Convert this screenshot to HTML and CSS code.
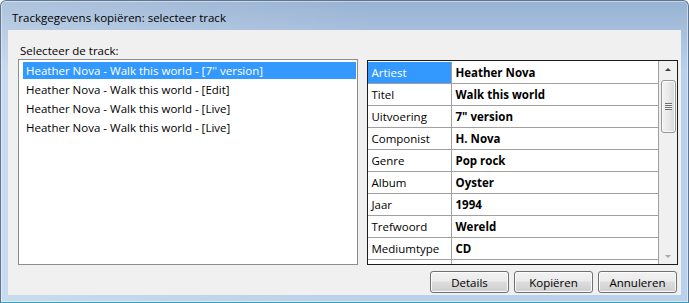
FILE: index.html
```html
<!DOCTYPE html>
<html lang="nl">
<head>
    <meta charset="UTF-8">
    <title>Trackgegevens kopiëren: selecteer track</title>
    <link rel="stylesheet" href="styles.css">
</head>
<body>
    <div class="window">
        <div class="titlebar">Trackgegevens kopiëren: selecteer track</div>
        <div class="client">
            <div class="prompt">Selecteer de track:</div>
            <div class="panes">
                <!-- tracklijst -->
                <ul class="track-list">
                    <li class="selected">Heather Nova - Walk this world - [7'' version]</li>
                    <li>Heather Nova - Walk this world - [Edit]</li>
                    <li>Heather Nova - Walk this world - [Live]</li>
                    <li>Heather Nova - Walk this world - [Live]</li>
                </ul>

                <!-- eigenschappen van de gekozen track -->
                <div class="props">
                    <div class="props-body">
                        <table class="props-table">
                            <tr class="selected"><td class="name">Artiest</td><td class="value">Heather Nova</td></tr>
                            <tr><td class="name">Titel</td><td class="value">Walk this world</td></tr>
                            <tr><td class="name">Uitvoering</td><td class="value">7" version</td></tr>
                            <tr><td class="name">Componist</td><td class="value">H. Nova</td></tr>
                            <tr><td class="name">Genre</td><td class="value">Pop rock</td></tr>
                            <tr><td class="name">Album</td><td class="value">Oyster</td></tr>
                            <tr><td class="name">Jaar</td><td class="value">1994</td></tr>
                            <tr><td class="name">Trefwoord</td><td class="value">Wereld</td></tr>
                            <tr><td class="name">Mediumtype</td><td class="value">CD</td></tr>
                            <tr><td class="name">&nbsp;</td><td class="value">&nbsp;</td></tr>
                        </table>
                    </div>
                    <div class="scrollbar">
                        <div class="sb-arrow up"></div>
                        <div class="sb-track">
                            <div class="sb-thumb"><span class="grip"></span></div>
                        </div>
                        <div class="sb-arrow down"></div>
                    </div>
                </div>
            </div>
            <div class="buttons">
                <button class="btn">Details</button>
                <button class="btn">Kopiëren</button>
                <button class="btn">Annuleren</button>
            </div>
        </div>
    </div>
</body>
</html>
```

FILE: styles.css
```css
html, body {
    margin: 0;
    padding: 0;
    background: #ffffff;
}

body {
    width: 689px;
    height: 303px;
    overflow: hidden;
    font-family: "Open Sans", "Noto Sans", sans-serif;
    font-size: 11.5px;
    color: #000;
}

/* venster */
.window {
    box-sizing: border-box;
    width: 689px;
    height: 303px;
    border: 1px solid #5f7690;
    border-bottom-color: #2fa3c4;
    border-radius: 6px 6px 0 0;
    padding: 0 7px 7px 7px;
    background:
        linear-gradient(to right, rgba(255, 255, 255, 0.22), rgba(255, 255, 255, 0) 55%),
        linear-gradient(#98b2d3, #b9d1ea 70px);
    box-shadow: inset 0 0 0 1px rgba(255, 255, 255, 0.45);
    display: flex;
    flex-direction: column;
}

.titlebar {
    height: 29px;
    box-sizing: border-box;
    padding: 7px 0 0 4px;
    line-height: 20px;
    color: #000;
    white-space: nowrap;
}

.client {
    height: 265px;
    box-sizing: border-box;
    background: #f0f0f0;
    padding: 12px 3px 0 10px;
}

.prompt {
    height: 17px;
    line-height: 17px;
    padding-left: 2px;
}

.panes {
    display: flex;
    gap: 9px;
}

/* lijst */
.track-list {
    list-style: none;
    margin: 0;
    box-sizing: border-box;
    width: 341px;
    height: 206px;
    padding: 2px 1px 0 4px;
    border: 1px solid #8d8d8d;
    background: #fff;
}

.track-list li {
    box-sizing: border-box;
    height: 17px;
    line-height: 16px;
    padding: 1px 0 0 3px;
    margin-bottom: 2px;
    white-space: nowrap;
}

.track-list li.selected {
    background: #3399ff;
    color: #fff;
}

/* eigenschappenraster */
.props {
    box-sizing: border-box;
    width: 311px;
    height: 205px;
    margin-top: 1px;
    border: 1px solid #1c1c1c;
    background: #fff;
    display: flex;
    overflow: hidden;
}

.props-body {
    flex: 1;
    padding-top: 1px;
    border-right: 1px solid #a0a0a0;
    overflow: hidden;
}

.props-table {
    width: 100%;
    border-collapse: collapse;
}

.props-table td {
    height: 21px;
    padding: 0 0 0 3px;
    border-bottom: 1px solid #a0a0a0;
    white-space: nowrap;
    line-height: 21px;
}

.props-table td.name {
    width: 80px;
    border-right: 1px solid #a0a0a0;
}

.props-table td.value {
    font-weight: 700;
}

.props-table tr.selected td.name {
    background: #3399ff;
    color: #fff;
}

/* schuifbalk */
.scrollbar {
    width: 18px;
    display: flex;
    flex-direction: column;
    background: #f0f0f0;
}

.sb-arrow {
    height: 17px;
    position: relative;
}

.sb-arrow::after {
    content: "";
    position: absolute;
    left: 6px;
    top: 7px;
    border-left: 3px solid transparent;
    border-right: 3px solid transparent;
}

.sb-arrow.up::after {
    border-bottom: 3px solid #404040;
}

.sb-arrow.down::after {
    top: 8px;
    border-top: 3px solid #a8a8a8;
}

.sb-track {
    flex: 1;
    padding: 2px 1px 0 2px;
}

.sb-thumb {
    box-sizing: border-box;
    height: 53px;
    border: 1px solid #979797;
    border-radius: 3px;
    background: linear-gradient(to right, #f3f3f3, #e8e8e8 50%, #d8d8d8);
    box-shadow: inset 0 0 0 1px #fafafa;
    display: flex;
    align-items: center;
    justify-content: center;
}

.grip {
    width: 7px;
    height: 7px;
    background: repeating-linear-gradient(#6d6d6d 0 1px, #f4f4f4 1px 2px);
}

/* knoppen */
.buttons {
    display: flex;
    justify-content: flex-end;
    gap: 5px;
    margin-top: 6px;
    padding-right: 1px;
}

.btn {
    width: 79px;
    height: 22px;
    padding: 0;
    font-family: inherit;
    font-size: 11.5px;
    color: #000;
    border: 1px solid #707070;
    border-radius: 3px;
    background: linear-gradient(#f2f2f2 0%, #ebebeb 45%, #dddddd 50%, #cfcfcf 100%);
    box-shadow: inset 0 0 0 1px #fbfbfb;
}
```
